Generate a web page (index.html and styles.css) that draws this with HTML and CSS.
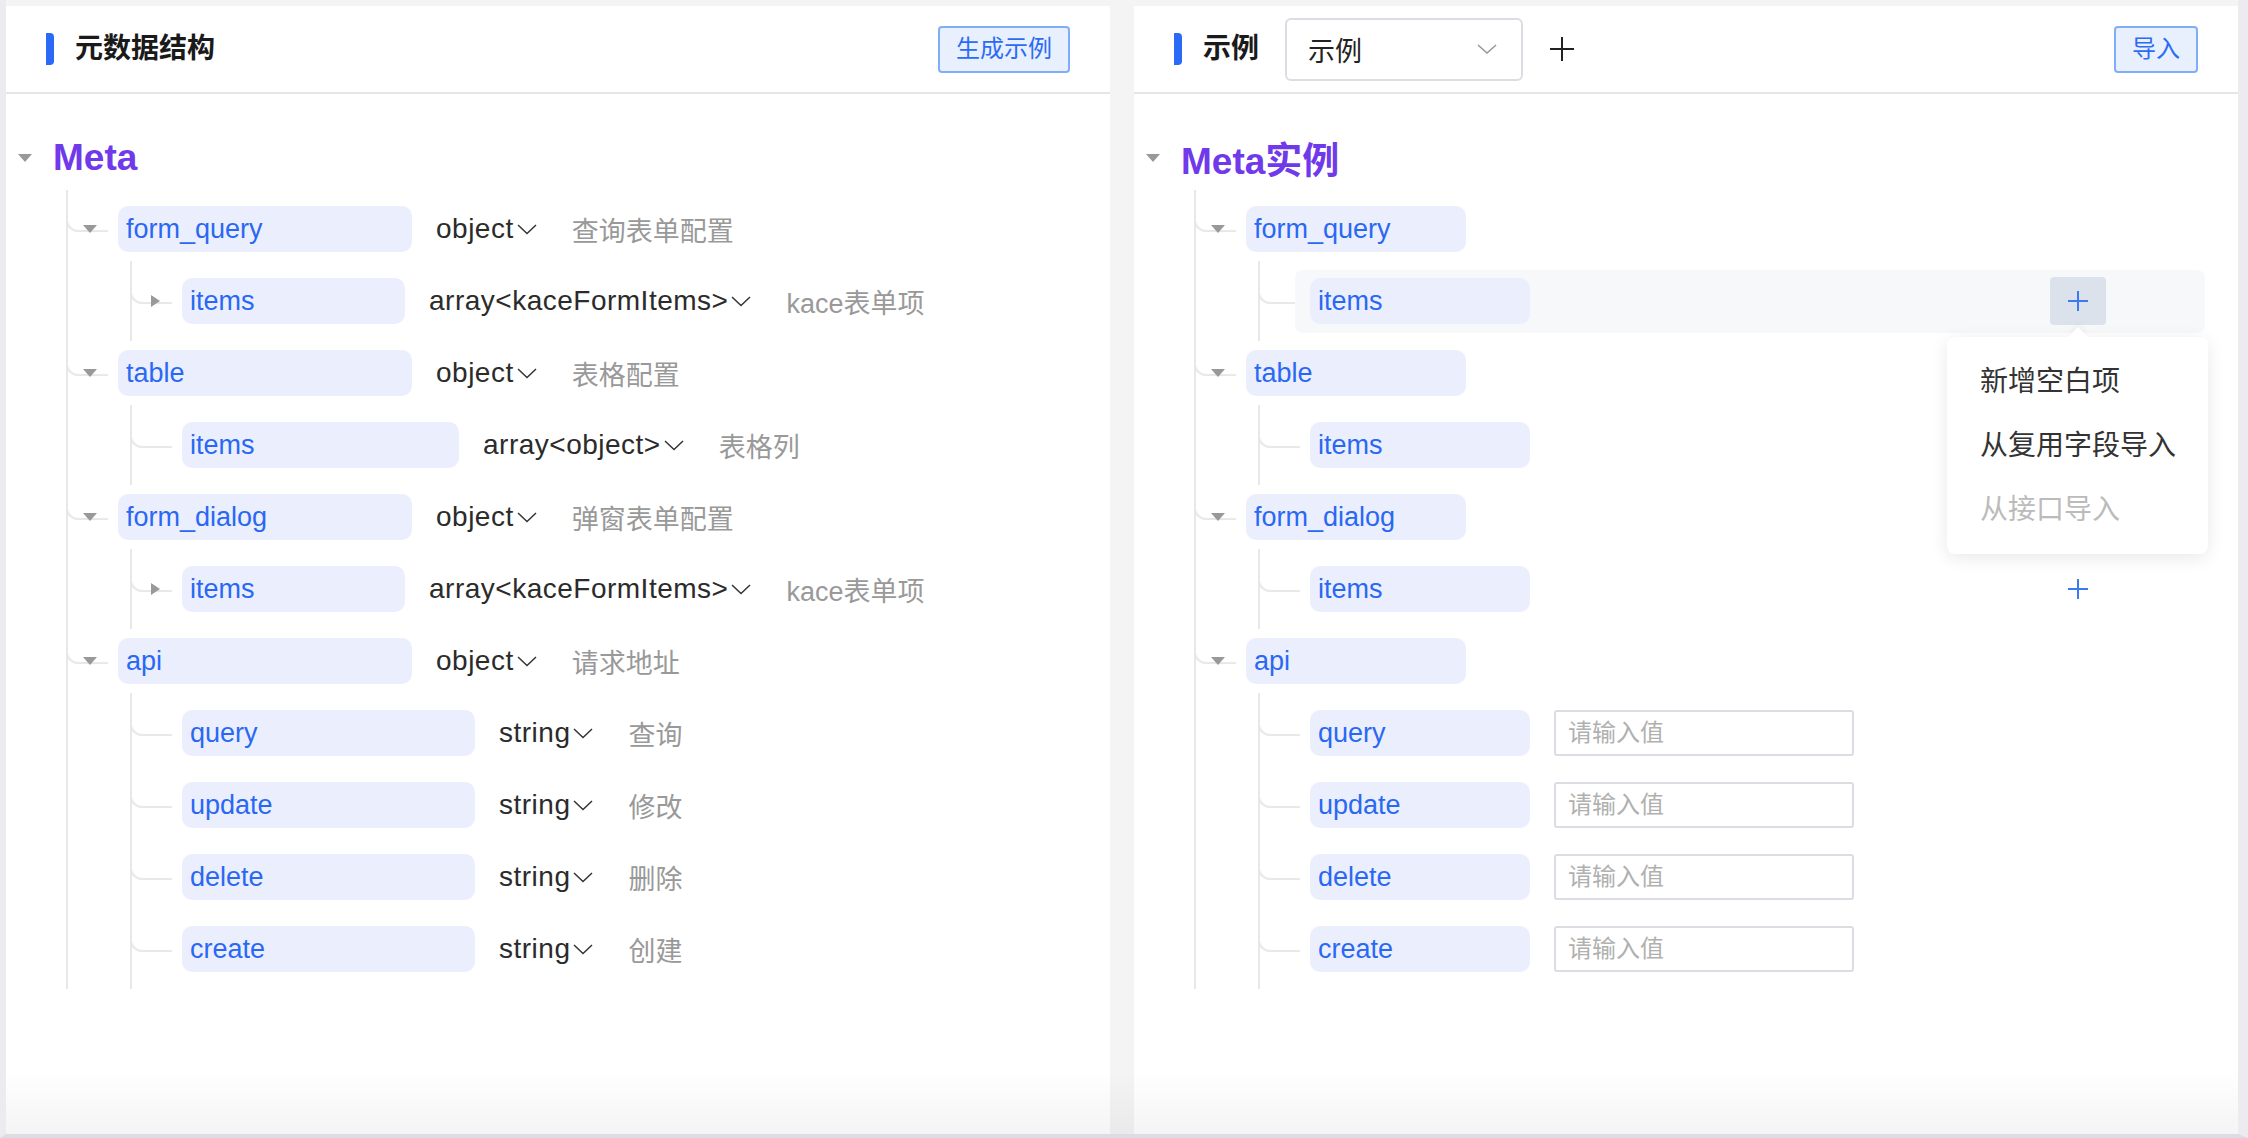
FILE: index.html
```html
<!DOCTYPE html>
<html lang="zh-CN">
<head>
<meta charset="utf-8">
<title>元数据结构</title>
<link rel="stylesheet" href="styles.css">
</head>
<body>
<div class="app">
  <section class="panel">
    <header class="panel-header">
      <span class="mark"></span>
      <h2 class="title">元数据结构</h2>
      <button class="btn">生成示例</button>
    </header>
    <div class="tree">
      <div class="root-row"><span class="caret-down"></span><span class="root-name">Meta</span></div>
      <div class="children l1">
        <div class="row">
          <span class="toggle"><span class="caret-down"></span></span>
          <span class="chip w-l1">form_query</span>
          <span class="type">object<svg class="chev" viewBox="0 0 20 11"><polyline points="1,1 10,9.5 19,1"/></svg></span>
          <span class="desc">查询表单配置</span>
        </div>
        <div class="children l2">
          <div class="row">
            <span class="toggle t2"><span class="caret-right"></span></span>
            <span class="chip w-arr">items</span>
            <span class="type">array&lt;kaceFormItems&gt;<svg class="chev" viewBox="0 0 20 11"><polyline points="1,1 10,9.5 19,1"/></svg></span>
            <span class="desc">kace表单项</span>
          </div>
        </div>
        <div class="row">
          <span class="toggle"><span class="caret-down"></span></span>
          <span class="chip w-l1">table</span>
          <span class="type">object<svg class="chev" viewBox="0 0 20 11"><polyline points="1,1 10,9.5 19,1"/></svg></span>
          <span class="desc">表格配置</span>
        </div>
        <div class="children l2">
          <div class="row">
            <span class="toggle t2"></span>
            <span class="chip w-obj">items</span>
            <span class="type">array&lt;object&gt;<svg class="chev" viewBox="0 0 20 11"><polyline points="1,1 10,9.5 19,1"/></svg></span>
            <span class="desc">表格列</span>
          </div>
        </div>
        <div class="row">
          <span class="toggle"><span class="caret-down"></span></span>
          <span class="chip w-l1">form_dialog</span>
          <span class="type">object<svg class="chev" viewBox="0 0 20 11"><polyline points="1,1 10,9.5 19,1"/></svg></span>
          <span class="desc">弹窗表单配置</span>
        </div>
        <div class="children l2">
          <div class="row">
            <span class="toggle t2"><span class="caret-right"></span></span>
            <span class="chip w-arr">items</span>
            <span class="type">array&lt;kaceFormItems&gt;<svg class="chev" viewBox="0 0 20 11"><polyline points="1,1 10,9.5 19,1"/></svg></span>
            <span class="desc">kace表单项</span>
          </div>
        </div>
        <div class="row">
          <span class="toggle"><span class="caret-down"></span></span>
          <span class="chip w-l1">api</span>
          <span class="type">object<svg class="chev" viewBox="0 0 20 11"><polyline points="1,1 10,9.5 19,1"/></svg></span>
          <span class="desc">请求地址</span>
        </div>
        <div class="children l2">
          <div class="row">
            <span class="toggle t2"></span>
            <span class="chip w-str">query</span>
            <span class="type">string<svg class="chev" viewBox="0 0 20 11"><polyline points="1,1 10,9.5 19,1"/></svg></span>
            <span class="desc">查询</span>
          </div>
          <div class="row">
            <span class="toggle t2"></span>
            <span class="chip w-str">update</span>
            <span class="type">string<svg class="chev" viewBox="0 0 20 11"><polyline points="1,1 10,9.5 19,1"/></svg></span>
            <span class="desc">修改</span>
          </div>
          <div class="row">
            <span class="toggle t2"></span>
            <span class="chip w-str">delete</span>
            <span class="type">string<svg class="chev" viewBox="0 0 20 11"><polyline points="1,1 10,9.5 19,1"/></svg></span>
            <span class="desc">删除</span>
          </div>
          <div class="row">
            <span class="toggle t2"></span>
            <span class="chip w-str">create</span>
            <span class="type">string<svg class="chev" viewBox="0 0 20 11"><polyline points="1,1 10,9.5 19,1"/></svg></span>
            <span class="desc">创建</span>
          </div>
        </div>
      </div>
    </div>
  </section>

  <section class="panel">
    <header class="panel-header">
      <span class="mark"></span>
      <h2 class="title">示例</h2>
      <div class="select">
        <span class="select-value">示例</span>
        <svg class="select-arrow" viewBox="0 0 20 10"><polyline points="1,1 10,9 19,1"/></svg>
      </div>
      <svg class="plus-icon" viewBox="0 0 24 24"><line x1="12" y1="0" x2="12" y2="24"/><line x1="0" y1="12" x2="24" y2="12"/></svg>
      <button class="btn">导入</button>
    </header>
    <div class="tree">
      <div class="root-row"><span class="caret-down"></span><span class="root-name">Meta实例</span></div>
      <div class="children l1">
        <div class="row">
          <span class="toggle"><span class="caret-down"></span></span>
          <span class="chip w-r">form_query</span>
        </div>
        <div class="children l2 r2">
          <div class="row">
            <div class="inner hl">
              <span class="chip w-r">items</span>
              <span class="add active">
                <svg class="add-icon" viewBox="0 0 20 20"><line x1="10" y1="0" x2="10" y2="20"/><line x1="0" y1="10" x2="20" y2="10"/></svg>
                <span class="menu">
                  <span class="menu-item">新增空白项</span>
                  <span class="menu-item">从复用字段导入</span>
                  <span class="menu-item disabled">从接口导入</span>
                </span>
              </span>
            </div>
          </div>
        </div>
        <div class="row">
          <span class="toggle"><span class="caret-down"></span></span>
          <span class="chip w-r">table</span>
        </div>
        <div class="children l2 r2">
          <div class="row">
            <div class="inner">
              <span class="chip w-r">items</span>
            </div>
          </div>
        </div>
        <div class="row">
          <span class="toggle"><span class="caret-down"></span></span>
          <span class="chip w-r">form_dialog</span>
        </div>
        <div class="children l2 r2">
          <div class="row">
            <div class="inner">
              <span class="chip w-r">items</span>
              <span class="add">
                <svg class="add-icon" viewBox="0 0 20 20"><line x1="10" y1="0" x2="10" y2="20"/><line x1="0" y1="10" x2="20" y2="10"/></svg>
              </span>
            </div>
          </div>
        </div>
        <div class="row">
          <span class="toggle"><span class="caret-down"></span></span>
          <span class="chip w-r">api</span>
        </div>
        <div class="children l2 r2">
          <div class="row">
            <div class="inner">
              <span class="chip w-r">query</span>
              <input class="value-input" type="text" placeholder="请输入值">
            </div>
          </div>
          <div class="row">
            <div class="inner">
              <span class="chip w-r">update</span>
              <input class="value-input" type="text" placeholder="请输入值">
            </div>
          </div>
          <div class="row">
            <div class="inner">
              <span class="chip w-r">delete</span>
              <input class="value-input" type="text" placeholder="请输入值">
            </div>
          </div>
          <div class="row">
            <div class="inner">
              <span class="chip w-r">create</span>
              <input class="value-input" type="text" placeholder="请输入值">
            </div>
          </div>
        </div>
      </div>
    </div>
  </section>
</div>
</body>
</html>
```

FILE: styles.css
```css
* {
  box-sizing: border-box;
}

html, body {
  margin: 0;
  padding: 0;
}

body {
  width: 2248px;
  height: 1138px;
  overflow: hidden;
  background: #f4f4f4;
  border-left: 6px solid #ebebf0;
  border-right: 10px solid #ebebf0;
  border-bottom: 4px solid #dcdde3;
  font-family: "Liberation Sans", "Noto Sans CJK SC", sans-serif;
  color: #333;
}

.app {
  position: relative;
  display: flex;
  gap: 24px;
  padding-top: 6px;
  height: 100%;
}

.app::after {
  content: "";
  position: absolute;
  left: 0;
  right: 0;
  bottom: 0;
  height: 64px;
  background: linear-gradient(to bottom, rgba(0, 0, 0, 0), rgba(0, 0, 0, 0.045));
  pointer-events: none;
}

.panel {
  position: relative;
  flex: 0 0 1104px;
  height: 1128px;
  background: #fff;
  display: flex;
  flex-direction: column;
}

.panel-header {
  height: 88px;
  flex: 0 0 88px;
  border-bottom: 2px solid #e6e6e6;
  display: flex;
  align-items: center;
  padding: 0 40px;
}

.mark {
  width: 8px;
  height: 32px;
  background: #2b6af7;
  border-radius: 0 4px 4px 0;
}

.title {
  margin: 0 0 0 21px;
  font-size: 28px;
  font-weight: 700;
  color: #1a1a1a;
  line-height: 1;
}

.btn {
  margin-left: auto;
  height: 47px;
  padding: 0 16px;
  border: 2px solid #80adf8;
  border-radius: 4px;
  background: #e8f0fe;
  color: #2c6cf5;
  font-family: "Liberation Sans", "Noto Sans CJK SC", sans-serif;
  font-size: 24px;
  line-height: 1;
}

.select {
  margin-left: 26px;
  width: 238px;
  height: 63px;
  border: 2px solid #dcdde2;
  border-radius: 6px;
  display: flex;
  align-items: center;
  padding: 0 24px 0 21px;
}

.select-value {
  font-size: 27px;
  color: #222;
}

.select-arrow {
  margin-left: auto;
  width: 20px;
  height: 10px;
  fill: none;
  stroke: #9a9a9a;
  stroke-width: 1.6;
}

.plus-icon {
  margin-left: 27px;
  width: 24px;
  height: 24px;
  stroke: #222;
  stroke-width: 2;
}

/* tree */
.tree {
  padding: 32px 0 0 12px;
}

.root-row {
  height: 64px;
  display: flex;
  align-items: center;
}

.root-name {
  margin-left: 21px;
  font-size: 37px;
  font-weight: 700;
  color: #7039ea;
}

.caret-down {
  display: block;
  width: 0;
  height: 0;
  border-left: 7px solid transparent;
  border-right: 7px solid transparent;
  border-top: 8px solid #999;
}

.caret-right {
  display: block;
  width: 0;
  height: 0;
  border-top: 6.5px solid transparent;
  border-bottom: 6.5px solid transparent;
  border-left: 9px solid #999;
}

.children {
  border-left: 2px solid #e8e8e8;
}

.children.l1 {
  margin-left: 48px;
  padding: 3px 0 4px;
}

.children.l2 {
  margin: -4px 0 -4px 62px;
  padding: 4px 0;
}

.row {
  position: relative;
  height: 72px;
  display: flex;
  align-items: center;
}

.row::before {
  content: "";
  position: absolute;
  left: -2px;
  top: 0;
  width: 40px;
  height: 37px;
  border-left: 2px solid #e8e8e8;
  border-bottom: 2px solid #e8e8e8;
  border-bottom-left-radius: 12px;
}

.toggle {
  position: relative;
  z-index: 1;
  flex: 0 0 50px;
  display: flex;
  align-items: center;
  padding-left: 15px;
}

.toggle.t2 {
  padding-left: 19px;
}

.chip {
  position: relative;
  z-index: 1;
  height: 46px;
  border-radius: 10px;
  background: #ebeffd;
  color: #2a68f4;
  font-size: 27px;
  display: flex;
  align-items: center;
  padding: 0 8px;
  flex: 0 0 auto;
}

.w-l1 { width: 294px; }
.w-arr { width: 223px; }
.w-obj { width: 277px; }
.w-str { width: 293px; }
.w-r { width: 220px; }

.type {
  margin-left: 24px;
  font-size: 28px;
  letter-spacing: 0.5px;
  color: #2b2b2b;
  display: flex;
  align-items: center;
  white-space: nowrap;
}

.chev {
  margin-left: 3px;
  width: 20px;
  height: 11px;
  fill: none;
  stroke: #333;
  stroke-width: 1.5;
}

.desc {
  margin-left: 35px;
  font-size: 27px;
  color: #999;
  white-space: nowrap;
}

/* right panel rows */
.r2 .inner {
  position: relative;
  z-index: 1;
  flex: 1;
  height: 63px;
  margin: 0 33px 0 35px;
  padding-left: 15px;
  border-radius: 8px;
  display: flex;
  align-items: center;
}

.r2 .inner.hl {
  background: #f7f8fa;
  z-index: 3;
}

.add {
  position: relative;
  margin-left: auto;
  margin-right: 99px;
  width: 56px;
  height: 48px;
  border-radius: 4px;
  display: flex;
  align-items: center;
  justify-content: center;
}

.add.active {
  background: #dce2eb;
}

.add-icon {
  width: 20px;
  height: 20px;
  stroke: #3d7af2;
  stroke-width: 2;
}

.menu {
  position: absolute;
  top: 60px;
  left: -103px;
  width: 261px;
  padding: 13px 0 12px;
  background: #fff;
  border-radius: 8px;
  box-shadow: 0 4px 18px rgba(0, 0, 0, 0.09);
  display: flex;
  flex-direction: column;
  z-index: 10;
}

.menu::before {
  content: "";
  position: absolute;
  top: -7px;
  left: 124px;
  width: 14px;
  height: 14px;
  background: #fff;
  transform: rotate(45deg);
  box-shadow: -3px -3px 5px rgba(0, 0, 0, 0.03);
}

.menu-item {
  position: relative;
  height: 64px;
  line-height: 64px;
  padding-left: 33px;
  font-size: 28px;
  color: #333;
  white-space: nowrap;
}

.menu-item.disabled {
  color: #bbb;
}

.value-input {
  margin-left: 24px;
  width: 300px;
  height: 46px;
  border: 2px solid #dcdde2;
  border-radius: 3px;
  padding: 0 12px;
  font-family: "Liberation Sans", "Noto Sans CJK SC", sans-serif;
  font-size: 24px;
  color: #333;
  background: #fff;
  outline: none;
}

.value-input::placeholder {
  color: #b0b0b0;
}
```
